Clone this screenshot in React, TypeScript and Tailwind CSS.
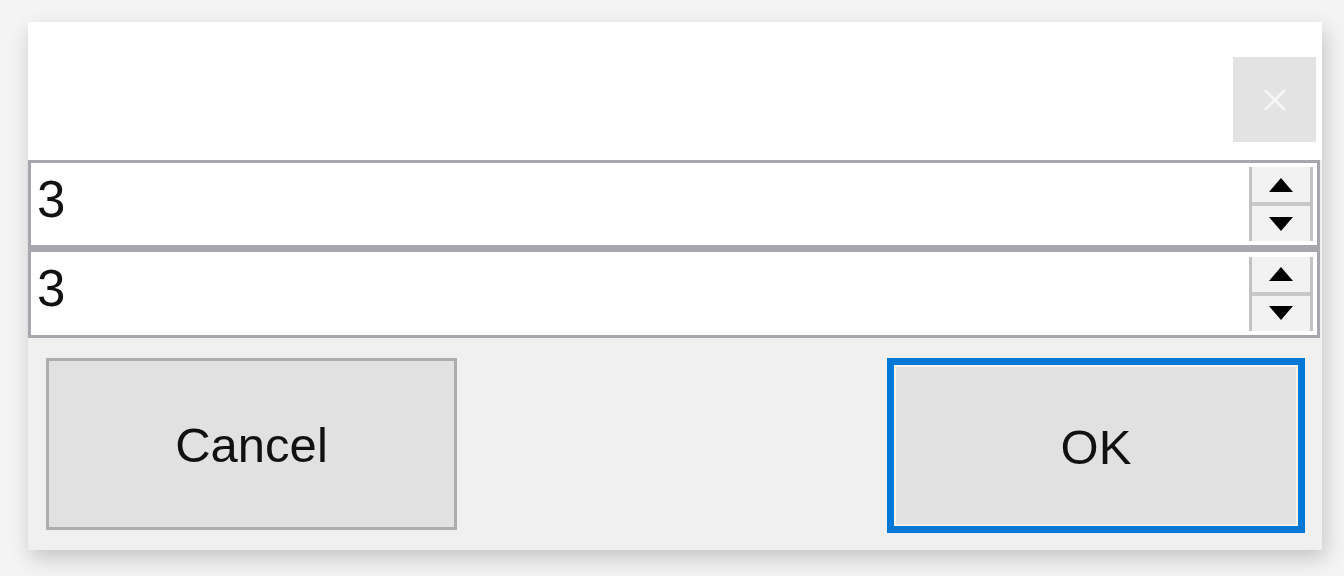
import { ReactNode } from "react";

const font = { fontFamily: '"Segoe UI", "Liberation Sans", Arial, sans-serif' };

function Spinner() {
  return (
    <div className="flex flex-col w-[64px] h-[74px] mr-[4px] border-x-[3px] border-[#c2c2c2] bg-[#f2f2f2]">
      <div className="flex-1 flex items-center justify-center border-b-[4px] border-[#c8c8c8]">
        <svg width="24" height="14" viewBox="0 0 24 14">
          <polygon points="12,0 24,14 0,14" fill="#000" />
        </svg>
      </div>
      <div className="flex-1 flex items-center justify-center">
        <svg width="24" height="14" viewBox="0 0 24 14">
          <polygon points="0,0 24,0 12,14" fill="#000" />
        </svg>
      </div>
    </div>
  );
}

function NumberRow({ value, className }: { value: string; className?: string }) {
  return (
    <div
      className={`flex items-center justify-between bg-white border-[3px] border-[#a6a6ac] mr-[2px] ${className ?? ""}`}
    >
      <span className="pl-[6px] pb-[10px] text-[51px] leading-none text-[#111]">{value}</span>
      <Spinner />
    </div>
  );
}

function Btn({ children, focused }: { children: ReactNode; focused?: boolean }) {
  return (
    <button
      className={
        focused
          ? "flex items-center justify-center w-[418px] h-[175px] bg-[#e1e1e1] border-[7px] border-[#0078d7] shadow-[inset_0_0_0_2px_#fbf3ea] text-[49px] text-[#111]"
          : "flex items-center justify-center w-[411px] h-[172px] bg-[#e1e1e1] border-[3px] border-[#adadad] text-[49px] text-[#111]"
      }
    >
      <span className="pt-[4px]">{children}</span>
    </button>
  );
}

export default function App() {
  return (
    <div className="w-[1344px] h-[576px] bg-[#f4f4f4] pt-[22px] pl-[28px]" style={font}>
      <div className="w-[1294px] h-[528px] flex flex-col bg-[#f0f0f0] shadow-[3px_8px_20px_rgba(0,0,0,0.2)]">
        {/* title area */}
        <div className="h-[138px] bg-white flex justify-end items-start pt-[35px] pr-[6px]">
          <div className="w-[83px] h-[85px] bg-[#e3e3e3] flex items-center justify-center">
            <svg width="24" height="24" viewBox="0 0 24 24">
              <path d="M2 2 L22 22 M22 2 L2 22" stroke="#f5f5f5" strokeWidth="3" />
            </svg>
          </div>
        </div>

        <NumberRow value="3" className="h-[89px] border-b-[4px]" />
        <NumberRow value="3" className="h-[89px] border-t-[3px]" />

        {/* buttons */}
        <div className="flex-1 flex justify-between items-start pt-[20px] pl-[18px] pr-[17px]">
          <Btn>Cancel</Btn>
          <Btn focused>OK</Btn>
        </div>
      </div>
    </div>
  );
}
